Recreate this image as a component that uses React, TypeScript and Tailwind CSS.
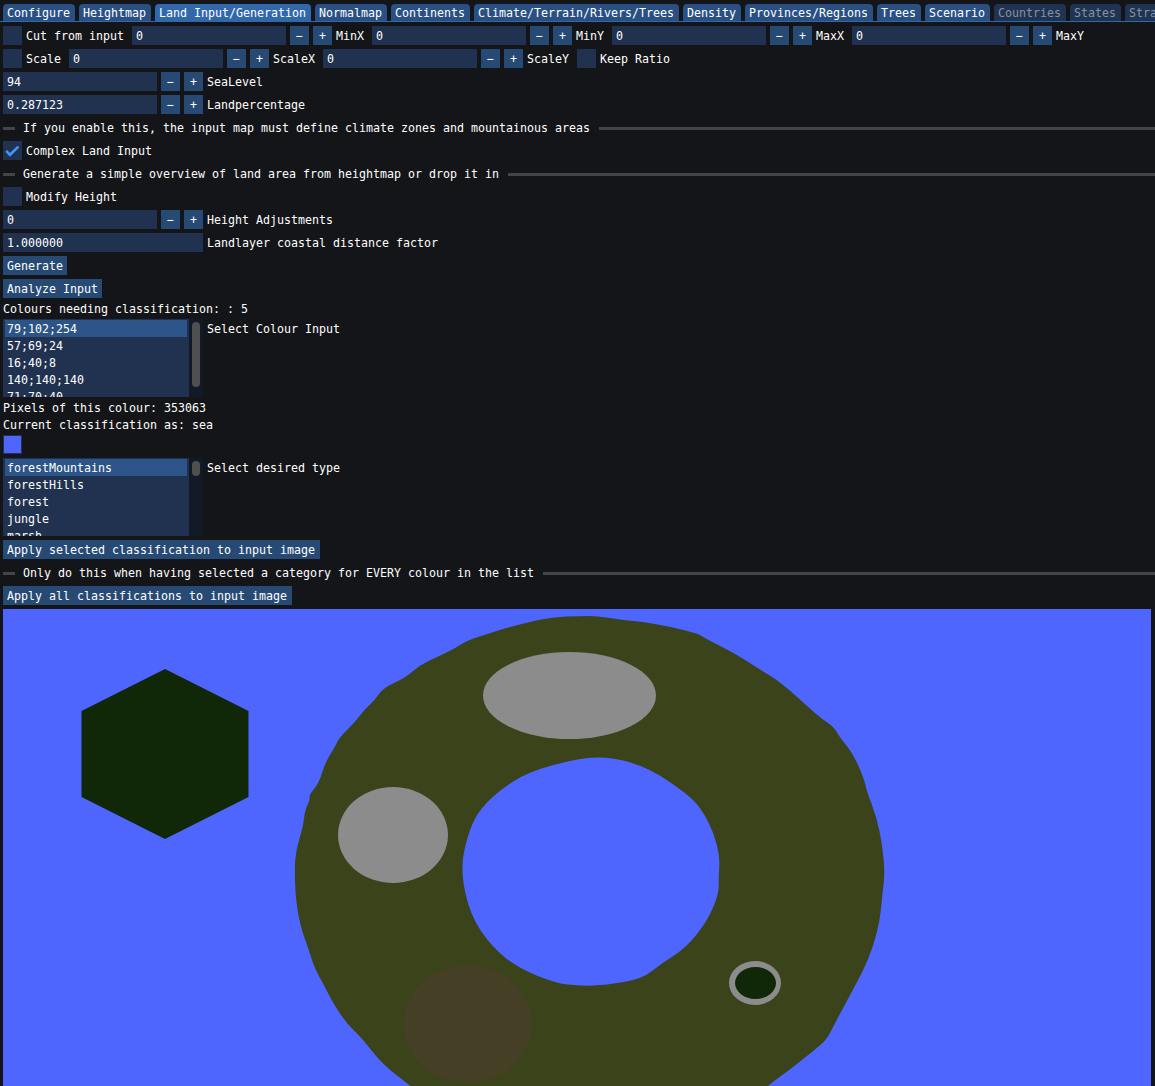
import React from "react";

const tabs: [string, number][] = [
  ["Configure", 0], ["Heightmap", 0], ["Land Input/Generation", 1], ["Normalmap", 0], ["Continents", 0],
  ["Climate/Terrain/Rivers/Trees", 0], ["Density", 0], ["Provinces/Regions", 0], ["Trees", 0], ["Scenario", 0],
  ["Countries", 2], ["States", 2], ["Strategic", 2],
];

function Tab({ label, kind }: { label: string; kind: number }) {
  const cls =
    kind === 1
      ? "bg-[#3168ac] text-white"
      : kind === 2
        ? "bg-[#1f3452] text-[#8791a0]"
        : "bg-[#2a5083] text-white";
  return <div className={`h-[17px] shrink-0 rounded-t-[4px] pl-[4px] pr-[5px] pt-[3px] ${cls}`}>{label}</div>;
}

function Label({ children }: { children: React.ReactNode }) {
  return <span className="h-[19px] shrink-0 whitespace-pre pt-[4px]">{children}</span>;
}

function Input({ value, width = "w-[154px]" }: { value: string; width?: string }) {
  return <div className={`h-[19px] shrink-0 bg-[#20324f] pl-[4px] pt-[4px] ${width}`}>{value}</div>;
}

function Btn({ children, width = "" }: { children: React.ReactNode; width?: string }) {
  return <div className={`h-[19px] shrink-0 self-start bg-[#274a74] pl-[4px] pr-[4px] pt-[4px] ${width}`}>{children}</div>;
}

function Small({ children }: { children: string }) {
  return <div className="flex h-[19px] w-[19px] shrink-0 items-center justify-center bg-[#274a74] pt-[2px]">{children}</div>;
}

function Stepper({ value, label }: { value: string; label: string }) {
  return (
    <div className="flex shrink-0 gap-[4px]">
      <Input value={value} />
      <Small>−</Small>
      <Small>+</Small>
      <Label>{label}</Label>
    </div>
  );
}

function Check({ label, checked = false }: { label: string; checked?: boolean }) {
  return (
    <div className="flex shrink-0 gap-[4px]">
      <div className="h-[19px] w-[19px] shrink-0 bg-[#20324f]">
        {checked && (
          <svg width="19" height="19" viewBox="0 0 19 19">
            <path d="M3.2 9.8 L7 13.8 L15.4 5.6" fill="none" stroke="#4296fa" strokeWidth="2.6" />
          </svg>
        )}
      </div>
      <Label>{label}</Label>
    </div>
  );
}

function Sep({ text }: { text: string }) {
  return (
    <div className="flex h-[19px] items-center gap-[8px] pt-[2px]">
      <div className="h-[3px] w-[12px] shrink-0 bg-[#43444b]" />
      <span className="shrink-0 whitespace-pre pr-[1px]">{text}</span>
      <div className="h-[3px] flex-1 bg-[#43444b]" />
    </div>
  );
}

function Line({ children }: { children: string }) {
  return <div className="h-[13px] whitespace-pre pt-[1px]">{children}</div>;
}

function ListBox({ items, label, grab }: { items: string[]; label: string; grab: string }) {
  return (
    <div className="flex gap-[4px]">
      <div className="flex h-[78px] w-[200px] shrink-0 overflow-hidden bg-[#20324f]">
        <div className="w-[186px] shrink-0 pl-[2px] pr-[2px] pt-[1px]">
          {items.map((t, i) => (
            <div key={t} className={`h-[17px] pl-[2px] pt-[3px] ${i === 0 ? "bg-[#2c5488]" : ""}`}>
              {t}
            </div>
          ))}
        </div>
        <div className="h-full flex-1 bg-[#121a27] pl-[3px] pt-[3px]">
          <div className={`w-[8px] rounded-[4px] bg-[#4f4f4f] ${grab}`} />
        </div>
      </div>
      <Label>{label}</Label>
    </div>
  );
}

const outer =
  "580,616 552,617 525,623 503,629 481,636 466,641 454,649 437,657 420,665 405,678 383,688 375,700 364,710 355,722 339,738 335,747 325,763 319,783 309,795 310,800 305,810 303,827 296,850 294.5,870 296,903 301.5,930 309,950 314,967 325.5,988 333,1003 347,1024 361,1037 383,1065 411,1086 440,1112 740,1112 767,1086 788,1071 812,1052 826.5,1040 834,1025 849,997 863.5,970 873,947 880,920 882,897 885,873 882,843 876.5,817 867,792 863.5,777 852.5,753 839.5,737 834,727 819,717 782,683 756,667 734,653 704.5,638 697,633 653,623 623,620 597,616";
const hole =
  "580,758 612,757 649,768 686,793 701,808 714,833 720,858 718.5,877 719,893 708,920 686,948 662,963 642,979 606,985 580,986 555,983 518,968 492,947 470,915 460.5,870 467,837 477,813 496,793 527,772";

function smooth(points: string): string {
  const p = points.split(" ").map((s) => s.split(",").map(Number));
  const mid = (a: number[], b: number[]) => `${(a[0] + b[0]) / 2} ${(a[1] + b[1]) / 2}`;
  let d = `M${mid(p[p.length - 1], p[0])}`;
  p.forEach((pt, i) => {
    d += ` Q${pt[0]} ${pt[1]} ${mid(pt, p[(i + 1) % p.length])}`;
  });
  return d + " Z";
}

export default function App() {
  return (
    <div className="h-[1086px] w-[1155px] overflow-hidden bg-[#141518] pt-[4px] font-['DejaVu_Sans_Mono',monospace] text-[11.63px] leading-[13px] text-white">
      <div className="flex h-[17px] gap-[4px] overflow-hidden pl-[3px]">
        {tabs.map(([t, k]) => (
          <Tab key={t} label={t} kind={k} />
        ))}
      </div>
      <div className="h-[1px] bg-[#3168ac]" />
      <div className="flex flex-col gap-[4px] pl-[3px] pt-[4px]">
        <div className="flex gap-[8px]">
          <Check label="Cut from input" />
          <Stepper value="0" label="MinX" />
          <Stepper value="0" label="MinY" />
          <Stepper value="0" label="MaxX" />
          <Stepper value="0" label="MaxY" />
        </div>
        <div className="flex gap-[8px]">
          <Check label="Scale" />
          <Stepper value="0" label="ScaleX" />
          <Stepper value="0" label="ScaleY" />
          <Check label="Keep Ratio" />
        </div>
        <Stepper value="94" label="SeaLevel" />
        <Stepper value="0.287123" label="Landpercentage" />
        <Sep text="If you enable this, the input map must define climate zones and mountainous areas" />
        <Check label="Complex Land Input" checked />
        <Sep text="Generate a simple overview of land area from heightmap or drop it in" />
        <Check label="Modify Height" />
        <Stepper value="0" label="Height Adjustments" />
        <div className="flex gap-[4px]">
          <Input value="1.000000" width="w-[200px]" />
          <Label>Landlayer coastal distance factor</Label>
        </div>
        <Btn>Generate</Btn>
        <Btn>Analyze Input</Btn>
        <Line>Colours needing classification: : 5</Line>
        <ListBox
          items={["79;102;254", "57;69;24", "16;40;8", "140;140;140", "71;70;40"]}
          label="Select Colour Input"
          grab="h-[65px]"
        />
        <Line>Pixels of this colour: 353063</Line>
        <Line>Current classification as: sea</Line>
        <div className="h-[19px] w-[19px] border border-[#20324f] bg-[#4f66fe]" />
        <ListBox
          items={["forestMountains", "forestHills", "forest", "jungle", "marsh"]}
          label="Select desired type"
          grab="h-[15px]"
        />
        <Btn width="w-[317px]">Apply selected classification to input image</Btn>
        <Sep text="Only do this when having selected a category for EVERY colour in the list" />
        <Btn width="w-[289px]">Apply all classifications to input image</Btn>
        <div className="h-[477px] w-[1148px] shrink-0 bg-[#4f66fe]">
          <svg width="1148" height="477" viewBox="3 609 1148 477">
            <polygon points="165,669 248.5,711 248.5,797 165,839 81.5,797 81.5,711" fill="#102808" />
            <path d={smooth(outer)} fill="#3a4319" />
            <path d={smooth(hole)} fill="#4f66fe" />
            <ellipse cx="569.5" cy="695.5" rx="86.5" ry="43.5" fill="#8c8c8c" />
            <ellipse cx="393" cy="835" rx="55" ry="48" fill="#8c8c8c" />
            <ellipse cx="467.5" cy="1024" rx="64.5" ry="59" fill="#443f25" />
            <ellipse cx="755" cy="983" rx="26" ry="22" fill="#8c8c8c" />
            <ellipse cx="755.5" cy="983" rx="20.5" ry="16" fill="#102808" />
          </svg>
        </div>
      </div>
    </div>
  );
}
